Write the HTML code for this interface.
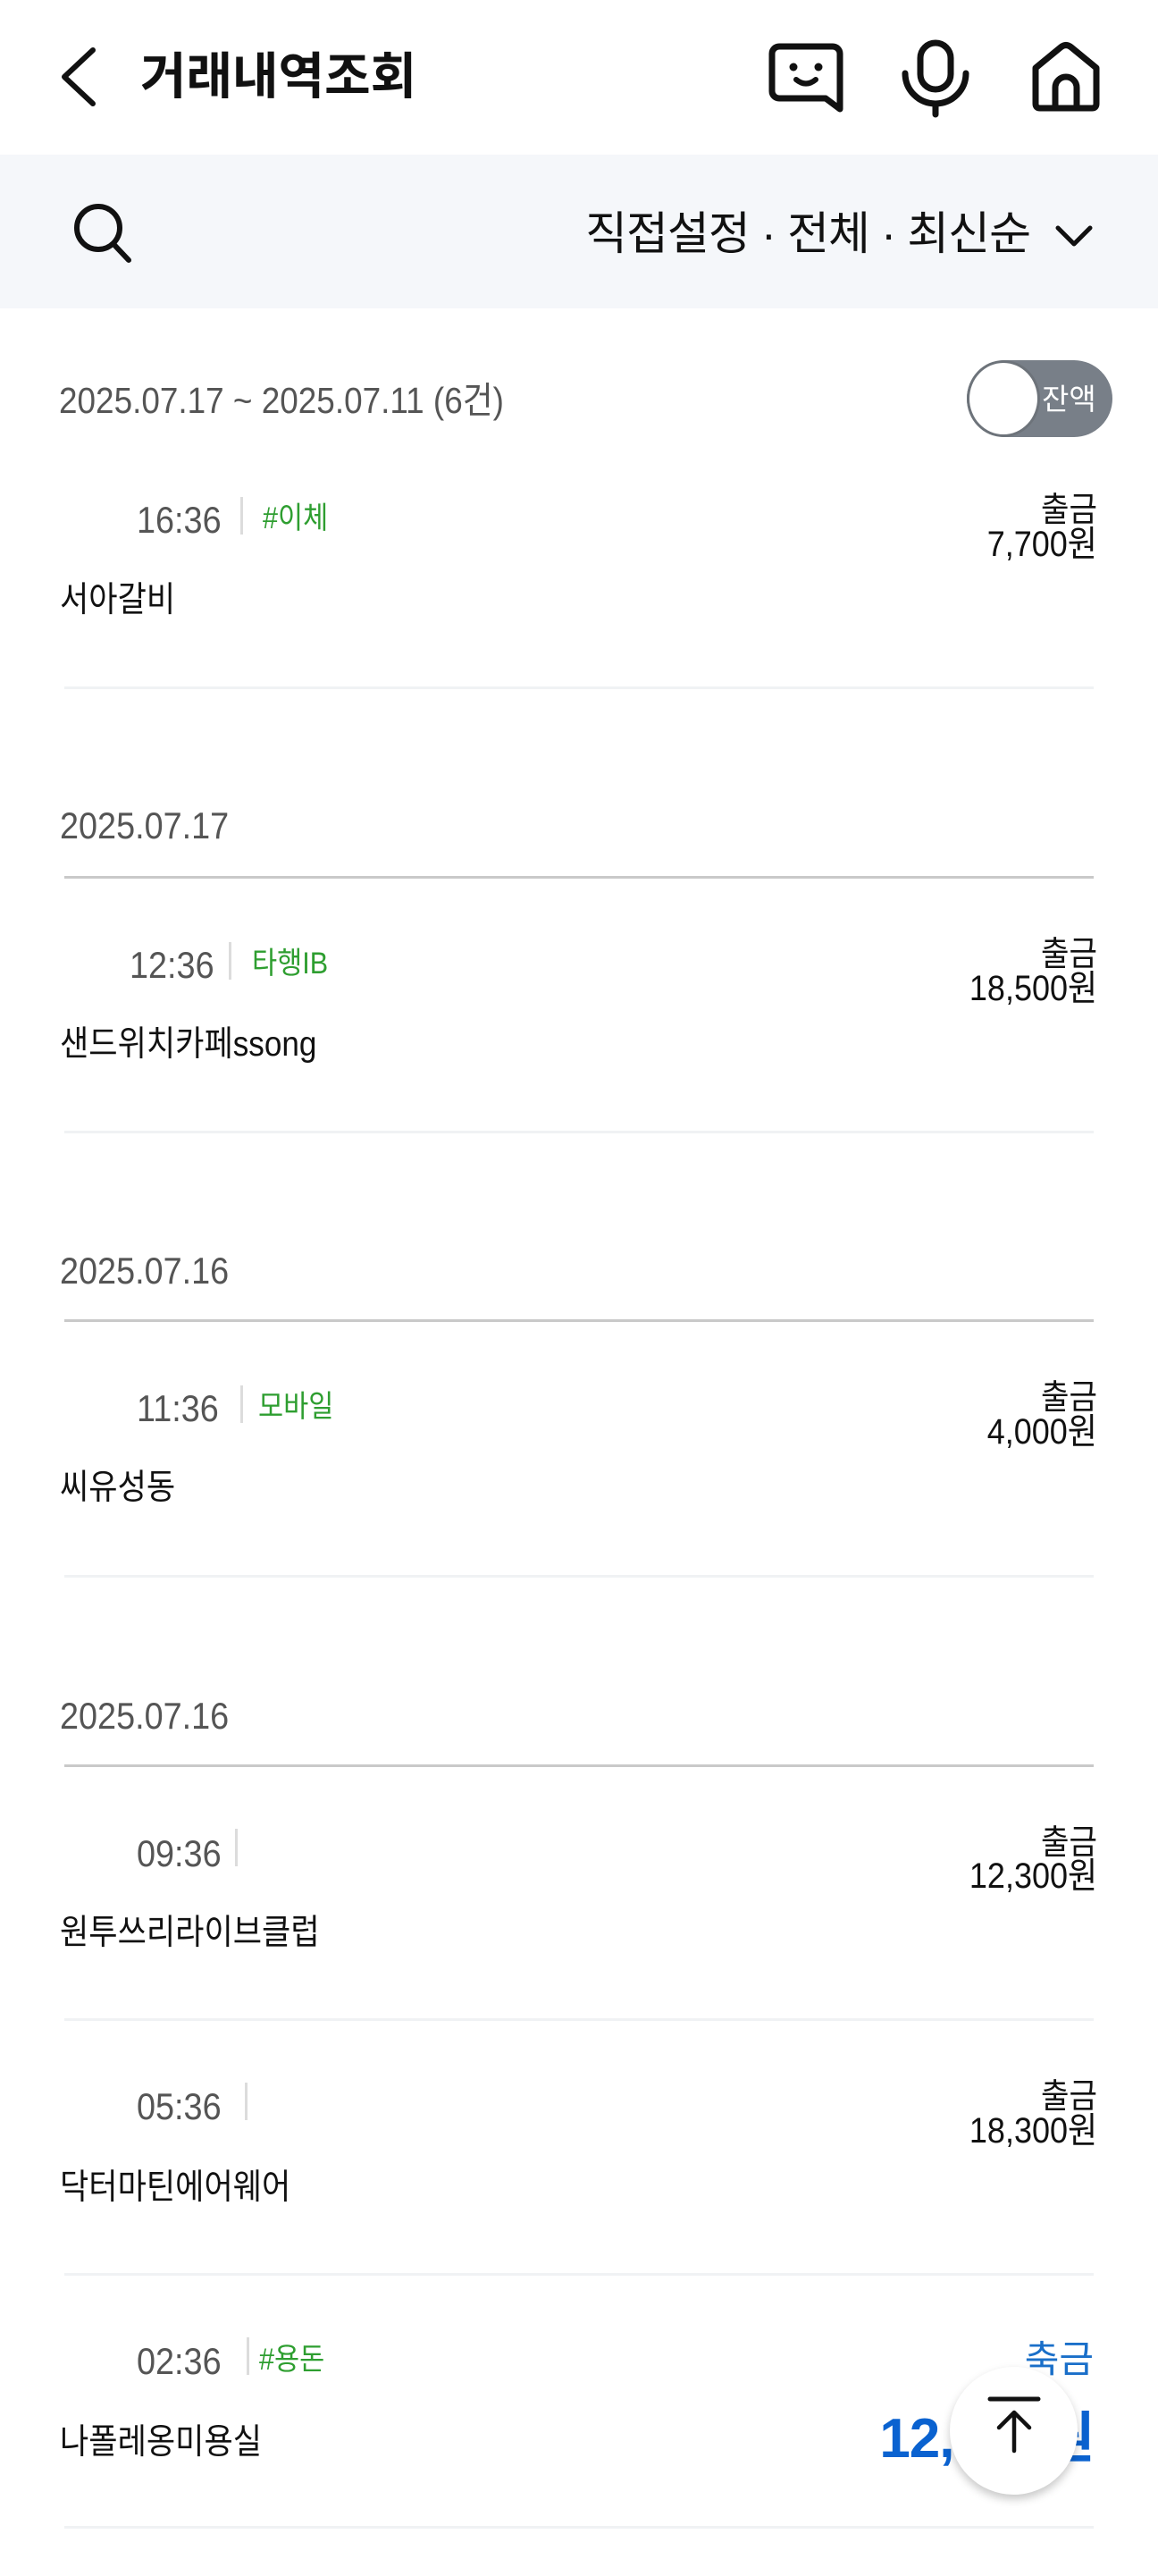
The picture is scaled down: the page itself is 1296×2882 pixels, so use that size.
<!DOCTYPE html>
<html><head><meta charset="utf-8">
<style>
*{margin:0;padding:0;box-sizing:border-box}
body{width:1296px;height:2882px;background:#fff;position:relative;overflow:hidden;font-family:"Liberation Sans","Noto Sans CJK KR",sans-serif;color:#111}
.a{position:absolute;white-space:nowrap;line-height:1}
.l{transform:scaleX(.9);transform-origin:left center}
.r{transform:scaleX(.9);transform-origin:right center;text-align:right}
.time{font-size:42px;color:#555}
.sep{position:absolute;width:3px;height:42px;background:#dcdcdc}
.tag{font-size:34px;color:#2e9e30}
.m{font-size:39px;color:#111}
.out{font-size:38px;color:#111}
.amt{font-size:40px;color:#111}
.dt{font-size:42px;color:#555}
.hl{position:absolute;left:72px;width:1152px;height:3px;background:#f0f2f4}
.dl{position:absolute;left:72px;width:1152px;height:3px;background:#c9c9c9}
</style></head><body>
<svg class="a" style="left:64px;top:52px" width="46" height="68" viewBox="0 0 46 68"><path d="M40 4 L8 34 L40 64" fill="none" stroke="#111" stroke-width="6" stroke-linecap="round" stroke-linejoin="round"/></svg>
<div class="a" style="left:157px;top:58px;font-size:56px;font-weight:bold;letter-spacing:0">거래내역조회</div>
<svg class="a" style="left:858px;top:46px" width="88" height="84" viewBox="0 0 88 84"><path d="M14 6 H74 A8 8 0 0 1 82 14 V76 L66 64 H14 A8 8 0 0 1 6 56 V14 A8 8 0 0 1 14 6 Z" fill="none" stroke="#111" stroke-width="7" stroke-linejoin="round"/><circle cx="30" cy="29" r="4.5" fill="#111"/><circle cx="58" cy="29" r="4.5" fill="#111"/><path d="M33 43 Q44 52 55 43" fill="none" stroke="#111" stroke-width="6" stroke-linecap="round"/></svg>
<svg class="a" style="left:1007px;top:44px" width="80" height="88" viewBox="0 0 80 88"><rect x="23" y="4" width="34" height="52" rx="17" fill="none" stroke="#111" stroke-width="7"/><path d="M6 38 A34 34 0 0 0 74 38" fill="none" stroke="#111" stroke-width="7" stroke-linecap="round"/><path d="M40 72 V84" stroke="#111" stroke-width="7" stroke-linecap="round"/></svg>
<svg class="a" style="left:1153px;top:46px" width="80" height="80" viewBox="0 0 80 80"><path d="M6 30 L34 7 Q40 2 46 7 L74 30 V70 Q74 75 69 75 H11 Q6 75 6 70 Z" fill="none" stroke="#111" stroke-width="7" stroke-linejoin="round"/><path d="M28 75 V52 A12 12 0 0 1 52 52 V75" fill="none" stroke="#111" stroke-width="7"/></svg>
<div class="a" style="left:0;top:173px;width:1296px;height:172px;background:#f5f7fa"></div>
<svg class="a" style="left:80px;top:225px" width="72" height="70" viewBox="0 0 72 70"><circle cx="30" cy="30" r="24" fill="none" stroke="#111" stroke-width="6"/><path d="M47 48 L64 66" stroke="#111" stroke-width="6" stroke-linecap="round"/></svg>
<div class="a" style="right:143px;top:236px;font-size:51px;color:#111;letter-spacing:-1px">직접설정 · 전체 · 최신순</div>
<svg class="a" style="left:1180px;top:250px" width="44" height="28" viewBox="0 0 44 28"><path d="M4 5 L22 23 L40 5" fill="none" stroke="#111" stroke-width="5" stroke-linecap="round" stroke-linejoin="round"/></svg>
<div class="a l dt" style="left:66px;top:428px;font-size:41px">2025.07.17 ~ 2025.07.11 (6건)</div>
<div class="a" style="left:1082px;top:403px;width:163px;height:86px;border-radius:43px;background:#787f88"></div>
<div class="a" style="left:1082px;top:403px;width:82px;height:86px;border-radius:50%;background:#fff;border:3px solid #6d737a"></div>
<div class="a" style="left:1166px;top:430px;font-size:33px;color:#fff">잔액</div>

<div class="a l time" style="left:153px;top:561px">16:36</div><div class="sep" style="left:269px;top:556px"></div>
<div class="a l tag" style="left:294px;top:563px">#이체</div>
<div class="a r out" style="right:68px;top:552px">출금</div>
<div class="a r amt" style="right:68px;top:589px">7,700원</div>
<div class="a l m" style="left:67px;top:652px">서아갈비</div>
<div class="hl" style="top:768px"></div>
<div class="a l dt" style="left:67px;top:903px">2025.07.17</div>
<div class="dl" style="top:980px"></div>

<div class="a l time" style="left:145px;top:1059px">12:36</div><div class="sep" style="left:256px;top:1054px"></div>
<div class="a l tag" style="left:282px;top:1061px">타행IB</div>
<div class="a r out" style="right:68px;top:1049px">출금</div>
<div class="a r amt" style="right:68px;top:1086px">18,500원</div>
<div class="a l m" style="left:67px;top:1149px">샌드위치카페ssong</div>
<div class="hl" style="top:1265px"></div>
<div class="a l dt" style="left:67px;top:1401px">2025.07.16</div>
<div class="dl" style="top:1476px"></div>

<div class="a l time" style="left:153px;top:1555px">11:36</div><div class="sep" style="left:269px;top:1550px"></div>
<div class="a l tag" style="left:289px;top:1557px">모바일</div>
<div class="a r out" style="right:68px;top:1545px">출금</div>
<div class="a r amt" style="right:68px;top:1582px">4,000원</div>
<div class="a l m" style="left:67px;top:1645px">씨유성동</div>
<div class="hl" style="top:1762px"></div>
<div class="a l dt" style="left:67px;top:1899px">2025.07.16</div>
<div class="dl" style="top:1974px"></div>

<div class="a l time" style="left:153px;top:2053px">09:36</div><div class="sep" style="left:263px;top:2046px"></div>
<div class="a r out" style="right:68px;top:2043px">출금</div>
<div class="a r amt" style="right:68px;top:2079px">12,300원</div>
<div class="a l m" style="left:67px;top:2143px">원투쓰리라이브클럽</div>
<div class="hl" style="top:2258px"></div>

<div class="a l time" style="left:153px;top:2336px">05:36</div><div class="sep" style="left:274px;top:2330px"></div>
<div class="a r out" style="right:68px;top:2327px">출금</div>
<div class="a r amt" style="right:68px;top:2364px">18,300원</div>
<div class="a l m" style="left:67px;top:2428px">닥터마틴에어웨어</div>
<div class="hl" style="top:2543px"></div>

<div class="a l time" style="left:153px;top:2621px">02:36</div><div class="sep" style="left:276px;top:2615px"></div>
<div class="a l tag" style="left:290px;top:2623px">#용돈</div>
<div class="a" style="right:72px;top:2619px;font-size:42px;color:#1a6fc9">축금</div>
<div class="a" style="right:72px;top:2698px;font-size:62px;font-weight:bold;color:#0a62d0;letter-spacing:-1px">12,300원</div>
<div class="a l m" style="left:67px;top:2713px">나폴레옹미용실</div>
<div class="hl" style="top:2826px"></div>

<div class="a" style="left:1063px;top:2648px;width:143px;height:143px;border-radius:50%;background:#fff;box-shadow:0 5px 10px rgba(0,0,0,.22)"></div>
<svg class="a" style="left:1100px;top:2680px" width="70" height="80" viewBox="0 0 70 80"><path d="M8 4 H62" stroke="#111" stroke-width="5" stroke-linecap="round"/><path d="M35 62 V20 M18 36 L35 19 L52 36" fill="none" stroke="#111" stroke-width="4.5" stroke-linecap="round" stroke-linejoin="round"/></svg>
</body></html>
